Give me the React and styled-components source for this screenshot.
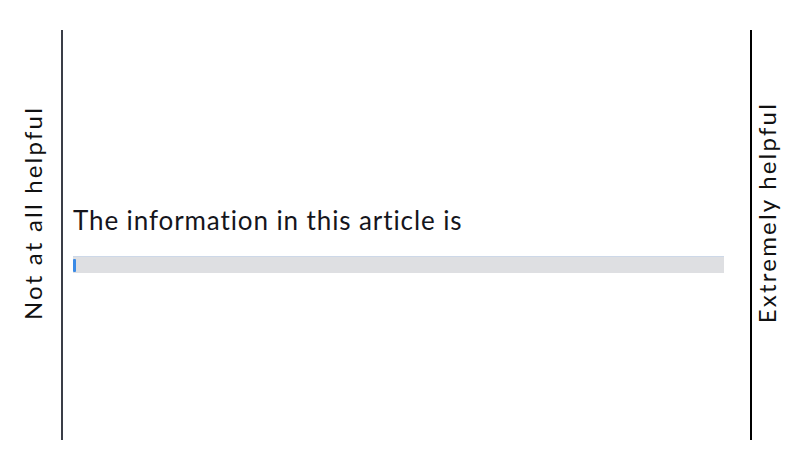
import React from "react";
import styled, { createGlobalStyle } from "styled-components";

const Global = createGlobalStyle`
  html, body { margin: 0; padding: 0; background: #fff; }
  body { font-family: Lato, "Open Sans", sans-serif; color: #1a1a1f; font-variant-ligatures: none; }
`;

const Page = styled.div`
  display: flex;
  height: 461px;
  box-sizing: border-box;
  padding: 30px 0 21px;
`;

const Side = styled.div`
  width: ${(p) => p.$w}px;
  display: flex;
  align-items: center;
  justify-content: ${(p) => p.$justify};
  padding: 0 ${(p) => p.$padR}px 44px ${(p) => p.$padL}px;
  box-sizing: border-box;
`;

const Label = styled.div`
  writing-mode: vertical-rl;
  transform: rotate(180deg);
  font-size: 24px;
  line-height: 24px;
  letter-spacing: ${(p) => p.$spacing}px;
  white-space: nowrap;
  color: #111;
`;

const Panel = styled.div`
  flex: 1;
  display: flex;
  flex-direction: column;
  justify-content: center;
  border-left: 2px solid #3a3d47;
  border-right: 2px solid #000;
  padding: 6px 26px 0 10px;
`;

const Question = styled.div`
  font-size: 26px;
  line-height: 32px;
  letter-spacing: 0.9px;
  color: #15151c;
  margin-bottom: 20px;
`;

const Track = styled.div`
  position: relative;
  height: 17px;
  background: #dedfe2;
  border-top: 1px solid #cdd8e8;
  box-sizing: border-box;
`;

const Thumb = styled.div`
  position: absolute;
  left: 0;
  top: 2px;
  bottom: 1px;
  width: 3px;
  background: #3a8ae6;
  border-radius: 1px;
`;

export default function App() {
  return (
    <>
      <Global />
      <Page>
        <Side $w={61} $justify="center" $padL={4} $padR={0}>
          <Label $spacing={2.2}>Not at all helpful</Label>
        </Side>
        <Panel>
          <Question>The information in this article is</Question>
          <Track>
            <Thumb />
          </Track>
        </Panel>
        <Side $w={48} $justify="flex-start" $padL={3} $padR={0}>
          <Label $spacing={2.2}>Extremely helpful</Label>
        </Side>
      </Page>
    </>
  );
}
